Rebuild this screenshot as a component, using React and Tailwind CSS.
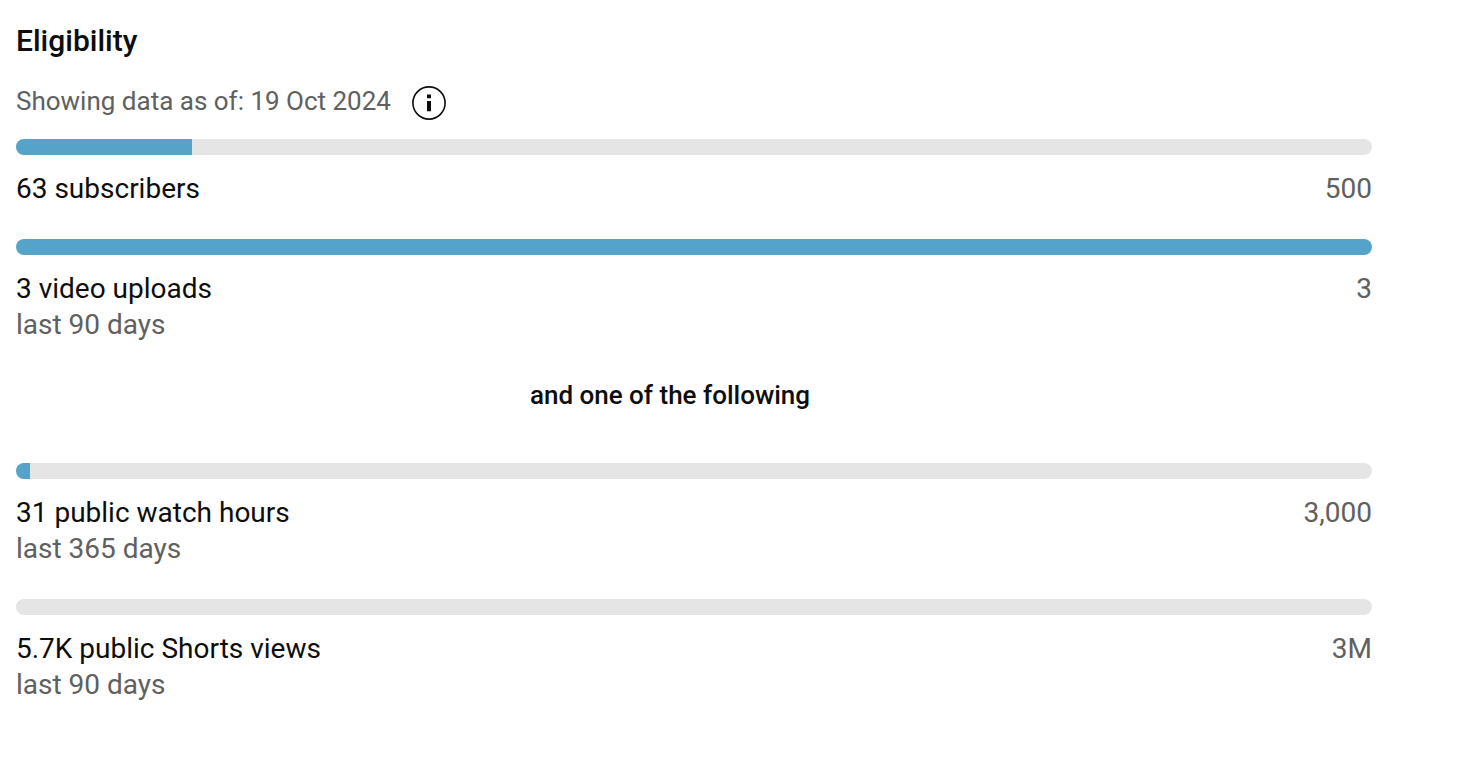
import React from 'react';

const mainGoals = [
  { label: '63 subscribers', target: '500', progress: 13 },
  { label: '3 video uploads', period: 'last 90 days', target: '3', progress: 100 },
];

const alternativeGoals = [
  { label: '31 public watch hours', period: 'last 365 days', target: '3,000', progress: 1 },
  { label: '5.7K public Shorts views', period: 'last 90 days', target: '3M', progress: 0 },
];

const InfoIcon = () => (
  <svg width="34" height="34" viewBox="0 0 34 34" fill="none" className="shrink-0">
    <circle cx="17" cy="17" r="16.1" stroke="#0d0d0d" strokeWidth="1.6" />
    <path d="M15 8.6h4v3.6h-4zM15 15h4v10.3h-4z" fill="#0d0d0d" />
  </svg>
);

const Goal = ({ label, period, target, progress }) => (
  <div>
    <div className="h-4 rounded-full bg-[#e5e5e5] overflow-hidden">
      <div className="h-full bg-[#55a3c8]" style={{ width: `${progress}%` }} />
    </div>
    <div className="mt-4 flex justify-between text-[28px] leading-9 text-[#606060]">
      <div>
        <div className="text-[#0d0d0d]">{label}</div>
        {period && <div>{period}</div>}
      </div>
      <div>{target}</div>
    </div>
  </div>
);

const App = () => (
  <section className="min-h-screen bg-white pl-4 pt-[19px] font-['Roboto',sans-serif]">
    <div className="w-[1356px]">
      <h2 className="text-[30px] leading-[44px] font-medium text-[#0d0d0d]">Eligibility</h2>
      <div className="mt-[23px] flex h-[34px] items-center gap-[21px] text-[26px] text-[#606060]">
        <span className="-mt-1">Showing data as of: 19 Oct 2024</span>
        <InfoIcon />
      </div>
      <div className="mt-[19px] space-y-8">
        {mainGoals.map((goal) => (
          <Goal key={goal.label} {...goal} />
        ))}
      </div>
      <p className="mt-[34px] -ml-12 text-center text-[26px] leading-9 font-medium text-[#0d0d0d]">
        and one of the following
      </p>
      <div className="mt-[50px] space-y-8">
        {alternativeGoals.map((goal) => (
          <Goal key={goal.label} {...goal} />
        ))}
      </div>
    </div>
  </section>
);

export default App;
